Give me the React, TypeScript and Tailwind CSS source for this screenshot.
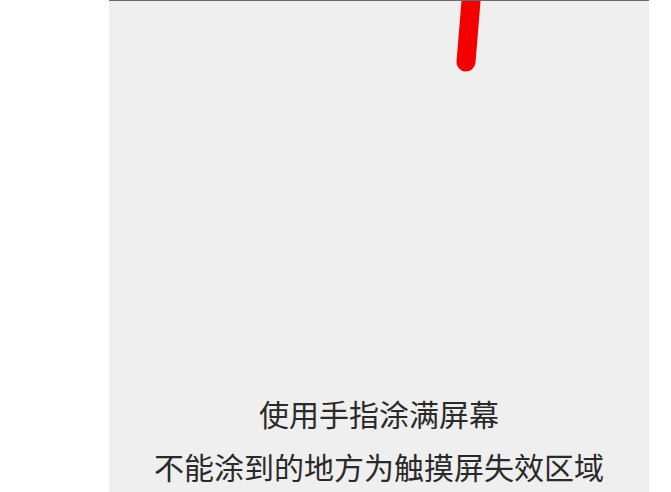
export default function App() {
  return (
    <div className="flex h-[492px] w-[671px] overflow-hidden bg-white">
      <div className="relative ml-[109px] flex h-full w-[540px] flex-col justify-end border-t border-[#6b6b6b] bg-[#efefef]">
        {/* finger stroke painted on the test canvas */}
        <svg
          className="absolute left-0 top-0"
          width="540"
          height="100"
          viewBox="0 0 540 100"
        >
          <line
            x1="363"
            y1="-12"
            x2="357"
            y2="61"
            stroke="#f40000"
            strokeWidth="19"
            strokeLinecap="round"
          />
        </svg>
        <div
          className="-mb-[1px] flex flex-col items-center text-[30px] leading-[53px] text-[#2a2a2a]"
          style={{ fontFamily: '"Noto Sans CJK SC", "Noto Sans", sans-serif' }}
        >
          <p>使用手指涂满屏幕</p>
          <p>不能涂到的地方为触摸屏失效区域</p>
        </div>
      </div>
    </div>
  );
}
